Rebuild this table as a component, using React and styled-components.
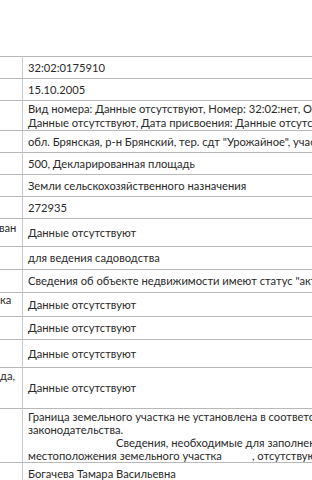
import React from "react";
import styled, { createGlobalStyle } from "styled-components";

const GlobalStyle = createGlobalStyle`
  html, body {
    margin: 0;
    padding: 0;
    background: #ffffff;
    overflow: hidden;
  }
  body {
    font-family: Lato, "Open Sans", "Noto Sans", sans-serif;
    color: #2a2a2a;
  }
`;

const Page = styled.div`
  width: 312px;
  height: 480px;
  padding-top: 56px;
  box-sizing: border-box;
  overflow: hidden;
`;

const Table = styled.div`
  border-top: 1px solid #b8b8b8;
  display: flex;
  flex-direction: column;
`;

const Row = styled.div`
  display: grid;
  grid-template-columns: 23px 1fr;
  height: ${(p) => p.$h}px;
  box-sizing: border-box;
  border-bottom: 1px solid #b8b8b8;
  font-size: 11.2px;
  line-height: ${(p) => p.$lh || 14}px;
`;

const Label = styled.div`
  border-right: 1px solid #c3c8d2;
  overflow: hidden;
  white-space: nowrap;
  padding-top: ${(p) => p.$top || 0}px;
  text-indent: ${(p) => p.$shift || 0}px;
`;

const Value = styled.div`
  padding-left: 5px;
  display: flex;
  flex-direction: column;
  justify-content: center;
  overflow: hidden;
  white-space: nowrap;
`;

const Line = styled.span`
  display: block;
  padding-left: ${(p) => p.$indent || 0}px;
`;

const Gap = styled.span`
  display: inline-block;
  width: ${(p) => p.$w}px;
`;

const rows = [
  { h: 22, lines: ["32:02:0175910"] },
  { h: 22, lines: ["15.10.2005"] },
  {
    h: 30,
    lines: [
      "Вид номера: Данные отсутствуют, Номер: 32:02:нет, Организация: Данные",
      "Данные отсутствуют, Дата присвоения: Данные отсутствуют",
    ],
  },
  { h: 22, lines: ['обл. Брянская, р-н Брянский, тер. сдт "Урожайное", участок'] },
  { h: 22, lines: ["500, Декларированная площадь"] },
  { h: 22, lines: ["Земли сельскохозяйственного назначения"] },
  { h: 22, lines: ["272935"] },
  { h: 28, label: "ван", top: 2, shift: -1, lines: ["Данные отсутствуют"] },
  { h: 23, lines: ["для ведения садоводства"] },
  { h: 23, lines: ['Сведения об объекте недвижимости имеют статус "актуальные"'] },
  { h: 24, label: "ка", top: 0, lines: ["Данные отсутствуют"] },
  { h: 23, lines: ["Данные отсутствуют"] },
  { h: 28, lines: ["Данные отсутствуют"] },
  { h: 41, label: "да,", top: 1, lines: ["Данные отсутствуют"] },
];

export default function App() {
  return (
    <>
      <GlobalStyle />
      <Page>
        <Table>
          {rows.map((r, i) => (
            <Row key={i} $h={r.h}>
              <Label $top={r.top} $shift={r.shift}>
                {r.label || ""}
              </Label>
              <Value>
                {r.lines.map((l, j) => (
                  <Line key={j}>{l}</Line>
                ))}
              </Value>
            </Row>
          ))}
          <Row $h={54} $lh={13}>
            <Label />
            <Value>
              <Line>Граница земельного участка не установлена в соответствии с требованиями</Line>
              <Line>законодательства.</Line>
              <Line $indent={88}>Сведения, необходимые для заполнения</Line>
              <Line>
                местоположения земельного участка
                <Gap $w={30} />, отсутствуют
              </Line>
            </Value>
          </Row>
          <Row $h={22}>
            <Label />
            <Value>
              <Line>Богачева Тамара Васильевна</Line>
            </Value>
          </Row>
        </Table>
      </Page>
    </>
  );
}
